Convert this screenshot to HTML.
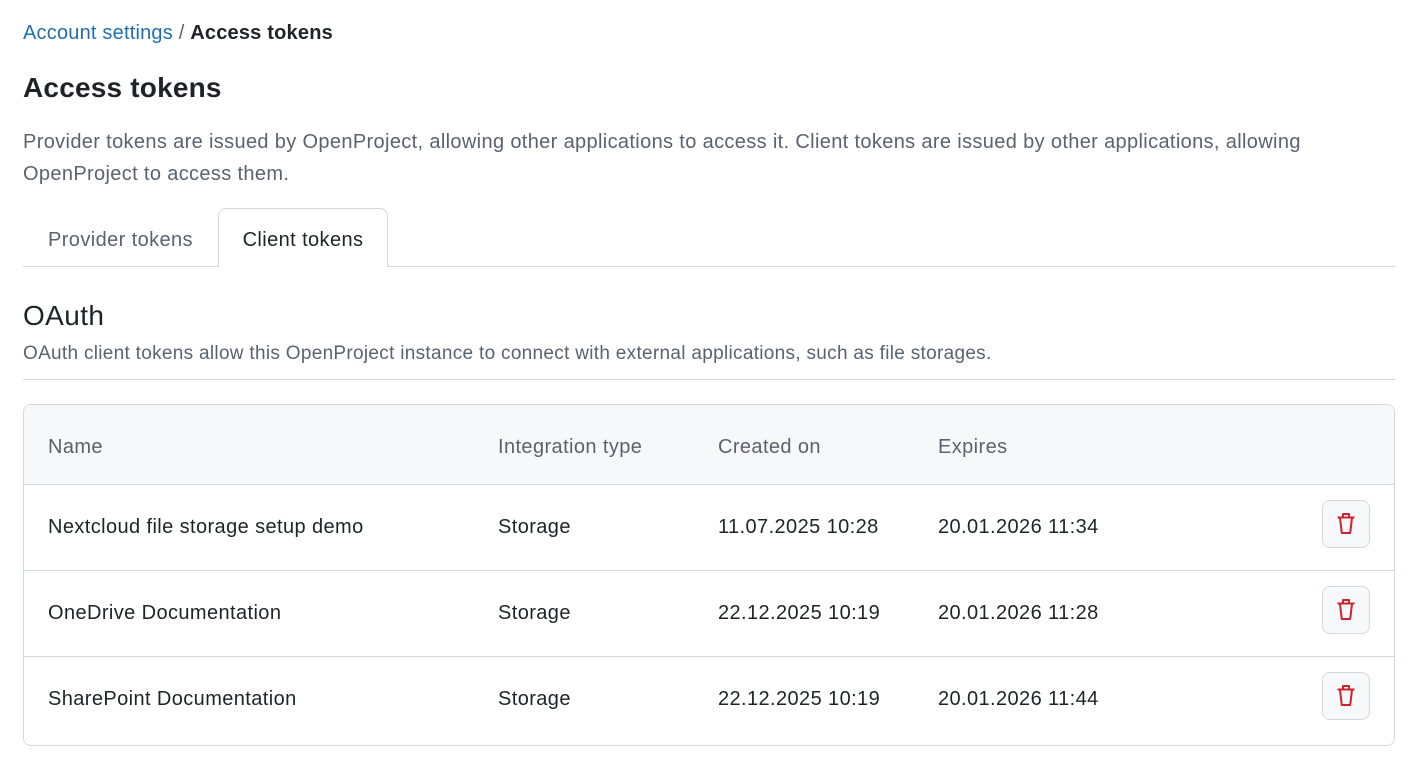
<!DOCTYPE html>
<html><head><meta charset="utf-8"><style>
*{box-sizing:border-box;margin:0;padding:0}
body{width:1413px;height:769px;background:#fff;font-family:"Liberation Sans",sans-serif;color:#1f2328;position:relative;overflow:hidden;letter-spacing:0.4px}
.a{position:absolute;white-space:nowrap}
.g{color:#59636e}
</style></head><body>
<div class="a" style="left:23px;top:22px;font-size:20px;letter-spacing:0.2px"><span style="color:#1f6fb0">Account settings</span> <span class="g">/</span> <b>Access tokens</b></div>
<div class="a" style="left:23px;top:72px;font-size:28px;font-weight:bold;letter-spacing:0.2px">Access tokens</div>
<div class="a g" style="left:23px;top:126px;font-size:20px;line-height:32px;letter-spacing:0.35px">Provider tokens are issued by OpenProject, allowing other applications to access it. Client tokens are issued by other applications, allowing<br>OpenProject to access them.</div>
<div class="a" style="left:23px;top:266px;width:1372px;height:1px;background:#d1d9e0"></div>
<div class="a g" style="left:48px;top:229px;font-size:20px">Provider tokens</div>
<div class="a" style="left:218px;top:208px;width:170px;height:59px;border:1px solid #d1d9e0;border-bottom:none;border-radius:8px 8px 0 0;background:#fff;font-size:20px;text-align:center;padding-top:20px">Client tokens</div>
<div class="a" style="left:23px;top:300px;font-size:28px">OAuth</div>
<div class="a g" style="left:23px;top:343px;font-size:19px;letter-spacing:0.3px">OAuth client tokens allow this OpenProject instance to connect with external applications, such as file storages.</div>
<div class="a" style="left:23px;top:379px;width:1372px;height:1px;background:#d1d9e0"></div>
<div class="a" style="left:23px;top:404px;width:1372px;height:342px;border:1px solid #d1d9e0;border-radius:8px;overflow:hidden">
<div style="height:80px;background:#f6f8fa;border-bottom:1px solid #d1d9e0;position:relative;font-size:20px;color:#59636e">
<span class="a" style="left:24px;top:31px">Name</span><span class="a" style="left:474px;top:31px">Integration type</span><span class="a" style="left:694px;top:31px">Created on</span><span class="a" style="left:914px;top:31px">Expires</span></div>
<div id="rows"></div>
</div>
<script>
const d=[["Nextcloud file storage setup demo","11.07.2025 10:28","20.01.2026 11:34"],["OneDrive Documentation","22.12.2025 10:19","20.01.2026 11:28"],["SharePoint Documentation","22.12.2025 10:19","20.01.2026 11:44"]];
let h="";d.forEach((r,i)=>{h+=`<div style="height:${i==2?88:86}px;position:relative;font-size:20px;${i<2?'border-bottom:1px solid #d1d9e0':''}">
<span class="a" style="left:24px;top:31px">${r[0]}</span><span class="a" style="left:474px;top:31px">Storage</span><span class="a" style="left:694px;top:31px">${r[1]}</span><span class="a" style="left:914px;top:31px">${r[2]}</span>
<div class="a" style="left:1298px;top:15px;width:48px;height:48px;border:1px solid #d1d9e0;border-radius:8px;background:#f6f8fa"><svg width="46" height="46" viewBox="0 0 46 46" style="position:absolute;left:0;top:0"><path d="M14.5 16.5h17M20 16.5v-3.5h6v3.5M17 17l1.8 15h8.4l1.8-15" fill="none" stroke="#cf222e" stroke-width="2" stroke-linejoin="round"/></svg></div></div>`});
document.getElementById("rows").innerHTML=h;
</script>
</body></html>
